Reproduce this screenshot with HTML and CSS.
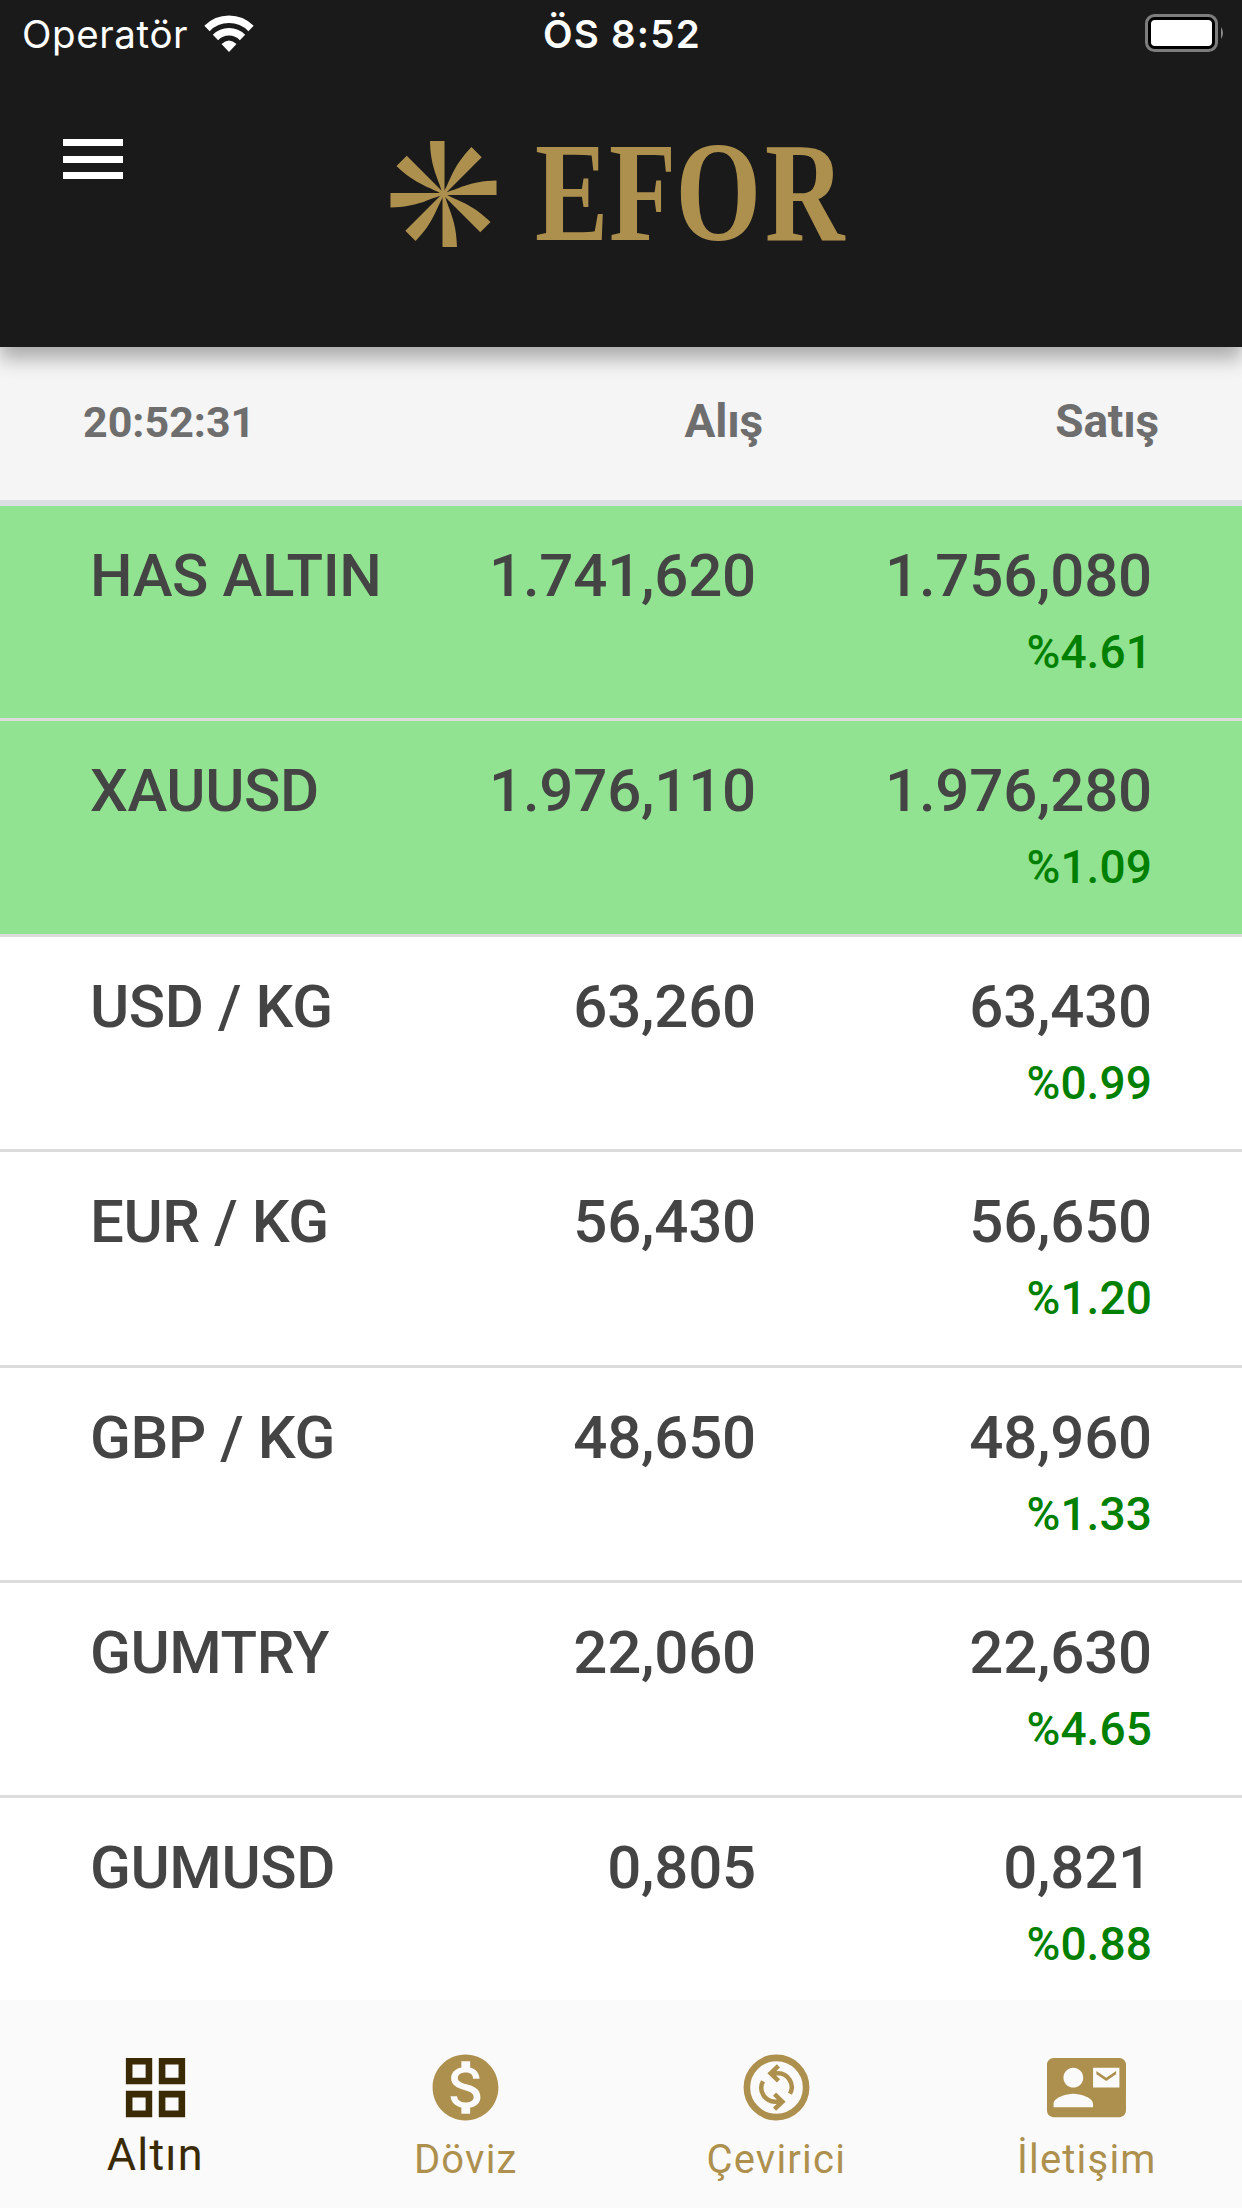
FILE: index.html
```html
<!DOCTYPE html>
<html lang="tr">
<head>
  <meta charset="UTF-8">
  <meta name="viewport" content="width=device-width, initial-scale=1.0">
  <title>Efor</title>
  <link rel="stylesheet" href="styles.css">
</head>
<body>
  <header class="header">
    <div class="status-bar">
      <div class="carrier">
        <span>Operatör</span>
        <svg class="wifi" viewBox="0 0 50 38">
          <path d="M3 13.5 A31 31 0 0 1 47 13.5" fill="none" stroke="#fff" stroke-width="7.5"/>
          <path d="M11.5 22.5 A19 19 0 0 1 38.5 22.5" fill="none" stroke="#fff" stroke-width="7.5"/>
          <path d="M17.5 29 Q25 22 32.5 29 L25 37 Z" fill="#fff"/>
        </svg>
      </div>
      <div class="clock">ÖS 8:52</div>
      <svg class="battery" viewBox="0 0 80 40">
        <rect x="1.5" y="1.5" width="70" height="35" rx="8" fill="#000" stroke="#7d7d7d" stroke-width="3"/>
        <rect x="6" y="6" width="61" height="26" rx="4" fill="#fff"/>
        <path d="M76 13 Q80 19 76 25 Z" fill="#8a8a8a"/>
      </svg>
    </div>
    <div class="toolbar">
      <button class="menu" aria-label="Menü"><span></span><span></span><span></span></button>
      <svg class="logo" viewBox="0 -40 470 187">
        <g fill="#ae904e">
          <path id="ray" d="M40 0 H54.5 V53 H52.5 C49 38 40.500 28 40 0 Z"/>
          <use href="#ray" transform="rotate(45 53.5 53)"/>
          <use href="#ray" transform="rotate(90 53.5 53)"/>
          <use href="#ray" transform="rotate(135 53.5 53)"/>
          <use href="#ray" transform="rotate(180 53.5 53)"/>
          <use href="#ray" transform="rotate(225 53.5 53)"/>
          <use href="#ray" transform="rotate(270 53.5 53)"/>
          <use href="#ray" transform="rotate(315 53.5 53)"/>
        </g>
        <text class="wordmark" transform="translate(145 99) scale(.78 1)" x="0 95 180 295">EFOR</text>
      </svg>
    </div>
  </header>

  <main class="prices">
    <div class="row head"><span class="time">20:52:31</span><span>Alış</span><span>Satış</span></div>
    <div class="row up"><span>HAS ALTIN</span><span>1.741,620</span><span>1.756,080<small>%4.61</small></span></div>
    <div class="row up"><span>XAUUSD</span><span>1.976,110</span><span>1.976,280<small>%1.09</small></span></div>
    <div class="row"><span>USD / KG</span><span>63,260</span><span>63,430<small>%0.99</small></span></div>
    <div class="row"><span>EUR / KG</span><span>56,430</span><span>56,650<small>%1.20</small></span></div>
    <div class="row"><span>GBP / KG</span><span>48,650</span><span>48,960<small>%1.33</small></span></div>
    <div class="row"><span>GUMTRY</span><span>22,060</span><span>22,630<small>%4.65</small></span></div>
    <div class="row"><span>GUMUSD</span><span>0,805</span><span>0,821<small>%0.88</small></span></div>
  </main>

  <nav class="tabs">
    <a class="tab active">
      <svg viewBox="0 0 24 24"><path d="M3 3v8h8V3H3zm6 6H5V5h4v4zm-6 4v8h8v-8H3zm6 6H5v-4h4v4zm4-16v8h8V3h-8zm6 6h-4V5h4v4zm-6 4v8h8v-8h-8zm6 6h-4v-4h4v4z"/></svg>
      <span>Altın</span>
    </a>
    <a class="tab">
      <svg viewBox="0 0 24 24"><path d="M12 2C6.48 2 2 6.48 2 12s4.48 10 10 10 10-4.48 10-10S17.52 2 12 2zm1.41 16.09V20h-2.67v-1.93c-1.71-.36-3.16-1.46-3.27-3.4h1.96c.1 1.05.82 1.87 2.65 1.87 1.96 0 2.4-.98 2.4-1.59 0-.83-.44-1.61-2.67-2.14-2.48-.6-4.18-1.62-4.18-3.67 0-1.72 1.39-2.84 3.11-3.21V4h2.67v1.95c1.86.45 2.79 1.86 2.85 3.39H14.3c-.05-1.11-.64-1.87-2.22-1.87-1.5 0-2.4.68-2.4 1.64 0 .84.65 1.39 2.67 1.91s4.18 1.39 4.18 3.91c-.01 1.83-1.38 2.83-3.12 3.16z"/></svg>
      <span>Döviz</span>
    </a>
    <a class="tab">
      <svg viewBox="0 0 24 24">
        <g class="line">
          <circle cx="12" cy="12" r="9"/>
          <path d="M12.6 5.4 10.2 7.7l2.4 2.3M10.4 7.7h1.8a4.2 4.2 0 0 1 3.9 6.2" stroke-width="1.35"/>
          <path d="M11.4 18.6l2.4-2.3-2.4-2.3M13.6 16.3h-1.8a4.2 4.2 0 0 1-3.9-6.2" stroke-width="1.35"/>
        </g>
      </svg>
      <span>Çevirici</span>
    </a>
    <a class="tab">
      <svg viewBox="0 0 24 24"><path d="M21 8V7l-3 2-3-2v1l3 2 3-2zm1-5H2C.9 3 0 3.9 0 5v14c0 1.1.9 2 2 2h20c1.1 0 1.99-.9 1.99-2L24 5c0-1.1-.9-2-2-2zM8 6c1.66 0 3 1.34 3 3s-1.34 3-3 3-3-1.34-3-3 1.34-3 3-3zm6 12H2v-1c0-2 4-3.1 6-3.1s6 1.1 6 3.1v1zm8-6h-8V6h8v6z"/></svg>
      <span>İletişim</span>
    </a>
  </nav>
</body>
</html>
```
FILE: styles.css
```css
* {
  box-sizing: border-box;
}
body {
  margin: 0;
  height: 2208px;
  display: flex;
  flex-direction: column;
  overflow: hidden;
  background-color: #fff;
  font-family: Roboto, sans-serif;
}
.header {
  height: 347px;
  flex: none;
  background-color: #1a1a1a;
  color: #fff;
  box-shadow: 0 12px 18px rgba(0, 0, 0, 0.3);
  z-index: 1;
}
.status-bar {
  height: 67px;
  padding: 0 17px 0 22px;
  display: grid;
  grid-template-columns: 1fr auto 1fr;
  align-items: center;
  font-family: Inter, sans-serif;
  font-size: 38.5px;
}
.carrier {
  display: flex;
  align-items: center;
  gap: 16px;
  letter-spacing: 0.6px;
}
.wifi {
  width: 50px;
  height: 38px;
}
.clock {
  margin-left: -3px;
  font-weight: 600;
  letter-spacing: 1.2px;
}
.battery {
  width: 80px;
  height: 40px;
  justify-self: end;
}
.toolbar {
  display: flex;
  padding: 67px 0 0 63px;
}
.menu {
  display: flex;
  flex-direction: column;
  gap: 9.5px;
  width: 60px;
  height: 66px;
  padding: 5px 0 0;
  border: none;
  background: none;
}
.menu span {
  width: 60px;
  height: 7px;
  background-color: #fff;
}
.logo {
  width: 470px;
  height: 187px;
  margin: -33px 0 0 267px;
}
.wordmark {
  font-family: "Liberation Serif", serif;
  font-size: 141px;
  font-weight: 700;
  fill: #ae904e;
}
.prices {
  height: 1653px;
  flex: none;
  overflow: hidden;
}
.row {
  height: 215.4px;
  padding: 35px 90px 0;
  display: grid;
  grid-template-columns: 310px 1fr 396px;
  border-bottom: 3px solid #dcdcdc;
  color: #444;
  font-size: 60px;
  font-weight: 500;
  line-height: 70px;
}
.row span {
  text-align: right;
  letter-spacing: -0.2px;
}
.row span:first-child {
  text-align: left;
  letter-spacing: -0.4px;
}
.row small {
  display: block;
  margin-top: 6px;
  font-size: 46px;
  letter-spacing: 0.1px;
  color: #008000;
}
.up {
  background-color: #92e391;
}
.head {
  height: 159px;
  padding: 39px 83px 0;
  background-color: #f5f5f5;
  border-bottom: 6px solid #dbdfe4;
  color: #6e6e6e;
  font-size: 46px;
  font-weight: 700;
}
.row span.time {
  padding-top: 1px;
  font-size: 43px;
  letter-spacing: 0;
}
.tabs {
  flex: 1;
  display: grid;
  grid-template-columns: repeat(4, 1fr);
  padding-top: 48px;
  background-color: #fafafa;
}
.tab {
  display: flex;
  flex-direction: column;
  align-items: center;
  color: #ae904e;
  font-size: 40px;
  letter-spacing: 1.2px;
}
.tab svg {
  width: 79px;
  height: 79px;
  fill: currentColor;
}
.tab .line {
  fill: none;
  stroke: currentColor;
  stroke-width: 2;
}
.tab span {
  margin-top: 9px;
}
.active {
  color: #3a2a06;
  font-size: 45px;
}
.active span {
  margin-top: 1px;
}
```
